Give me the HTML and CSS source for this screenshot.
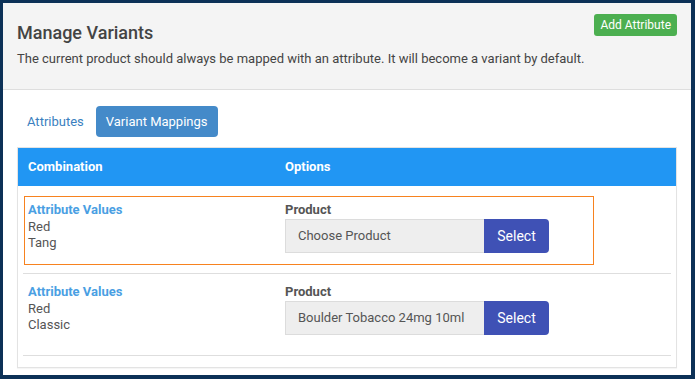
FILE: index.html
```html
<!DOCTYPE html>
<html>
<head>
<meta charset="utf-8">
<link rel="stylesheet" href="styles.css">
</head>
<body>
<div class="frame">
  <div class="box-header">
    <div class="title-row">
      <h3 class="title">Manage Variants</h3>
      <button class="btn-add">Add Attribute</button>
    </div>
    <p class="desc">The current product should always be mapped with an attribute. It will become a variant by default.</p>
  </div>
  <div class="box-body">
    <ul class="tabs">
      <li class="tab">Attributes</li>
      <li class="tab active">Variant Mappings</li>
    </ul>
    <div class="panel">
      <div class="thead">
        <div class="th col1">Combination</div>
        <div class="th">Options</div>
      </div>
      <div class="tbody">
        <div class="row">
          <div class="cell-box highlight">
            <div class="col1 values">
              <div class="val-title">Attribute Values</div>
              <div>Red</div>
              <div>Tang</div>
            </div>
            <div class="options">
              <div class="label">Product</div>
              <div class="input-group">
                <div class="input">Choose Product</div>
                <button class="btn-select">Select</button>
              </div>
            </div>
          </div>
        </div>
        <div class="row">
          <div class="cell-box">
            <div class="col1 values">
              <div class="val-title">Attribute Values</div>
              <div>Red</div>
              <div>Classic</div>
            </div>
            <div class="options">
              <div class="label">Product</div>
              <div class="input-group">
                <div class="input">Boulder Tobacco 24mg 10ml</div>
                <button class="btn-select">Select</button>
              </div>
            </div>
          </div>
        </div>
      </div>
    </div>
  </div>
</div>
</body>
</html>
```
FILE: styles.css
```css
* { box-sizing: border-box; }
html, body { margin: 0; padding: 0; }
body {
  font-family: Roboto, "Liberation Sans", sans-serif;
  color: #444;
  background: #fff;
}
.frame {
  width: 695px;
  height: 379px;
  border-style: solid;
  border-color: #0c3157;
  border-width: 3px 4px 4px 3px;
  overflow: hidden;
  background: #fff;
}
.box-header {
  background: #f4f4f4;
  border-bottom: 1px solid #dedede;
  padding: 11px 14px 20px 14px;
}
.title-row {
  display: flex;
  justify-content: space-between;
  align-items: flex-start;
}
.title {
  margin: 8px 0 0 0;
  font-size: 18px;
  line-height: 22px;
  font-weight: 500;
  color: #444;
}
.btn-add {
  font-family: inherit;
  background: #4caf50;
  color: #fff;
  border: none;
  border-radius: 3px;
  font-size: 12px;
  line-height: 22px;
  height: 22px;
  padding: 0 6px;
  margin: 0;
}
.desc {
  margin: 5px 0 0 0;
  font-size: 13px;
  line-height: 20px;
  color: #444;
}
.box-body {
  padding: 16px 14px 0 14px;
}
.tabs {
  list-style: none;
  margin: 0 0 10px 0;
  padding: 0;
  display: flex;
  gap: 2px;
}
.tab {
  font-size: 13px;
  line-height: 17px;
  padding: 7px 10px;
  color: #3a7fc0;
  border-radius: 4px;
}
.tab.active {
  background: #448ac9;
  color: #fff;
}
.panel {
  border: 1px solid #e3e3e3;
  box-shadow: 0 1px 1px rgba(0,0,0,0.04);
}
.thead {
  background: #2196f3;
  display: flex;
  color: #fff;
  font-weight: 700;
  font-size: 13px;
  line-height: 18px;
}
.th {
  padding: 10px 10px;
}
.thead .col1 { width: 257px; }
.tbody {
  padding: 6px 5px 11px 5px;
}
.row {
  padding: 4px 0 8px 0;
  border-bottom: 1px solid #dedede;
}
.cell-box {
  display: flex;
  width: 570px;
  margin-left: 1px;
  border: 1px solid transparent;
  padding: 4px 3px 11px 3px;
}
.cell-box.highlight {
  border-color: #f7821f;
}
.values {
  width: 257px;
  padding-top: 1px;
  font-size: 13px;
  line-height: 16.6px;
  color: #555;
}
.val-title {
  color: #4a9fe3;
  font-weight: 700;
}
.label {
  font-size: 13px;
  line-height: 17px;
  font-weight: 700;
  color: #555;
  margin-bottom: 1px;
}
.input-group {
  display: flex;
  height: 34px;
}
.input {
  width: 199px;
  height: 34px;
  background: #eee;
  border: 1px solid #dcdcdc;
  border-right: none;
  padding: 0 12px;
  font-size: 13px;
  line-height: 32px;
  color: #555;
  white-space: nowrap;
}
.btn-select {
  font-family: inherit;
  width: 65px;
  height: 34px;
  margin: 0;
  background: #3f51b5;
  color: #fff;
  border: none;
  border-radius: 0 4px 4px 0;
  font-size: 14px;
  padding: 0;
}
```
